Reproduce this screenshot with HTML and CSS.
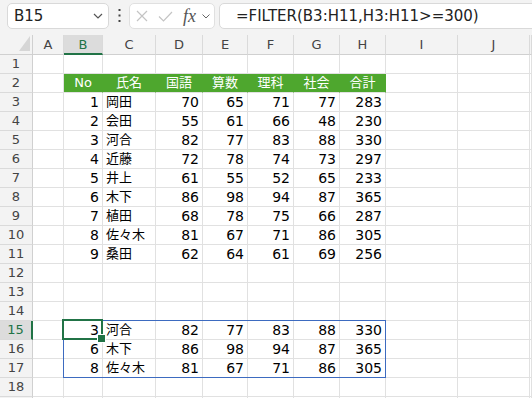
FILE: index.html
```html
<!DOCTYPE html>
<html lang="ja">
  <head>
    <meta charset="UTF-8" />
    <title>FILTER</title>
    <link rel="stylesheet" href="styles.css">
  </head>
  <body>
    <div class="bar">
      <div class="namebox">
        <span>B15</span>
        <svg width="10" height="6" viewBox="0 0 10 6"><path d="M1 1l4 4 4-4" fill="none" stroke="#555" stroke-width="1.2"/></svg>
      </div>
      <div class="dots">
        <svg width="3" height="14" viewBox="0 0 3 14"><rect x="0.5" y="0" width="2" height="2" fill="#444"/><rect x="0.5" y="5.5" width="2" height="2" fill="#444"/><rect x="0.5" y="11" width="2" height="2" fill="#444"/></svg>
      </div>
      <div class="fxbox">
        <svg width="12" height="12" viewBox="0 0 12 12"><path d="M1 1l10 10M11 1L1 11" fill="none" stroke="#c4c4c4" stroke-width="1.2"/></svg>
        <svg width="15" height="11" viewBox="0 0 15 11"><path d="M1 5.5l4.5 4.5L14 1" fill="none" stroke="#c4c4c4" stroke-width="1.2"/></svg>
        <span class="fx">fx</span>
        <svg width="8" height="5" viewBox="0 0 8 5"><path d="M0.5 0.5l3.5 3.5 3.5-3.5" fill="none" stroke="#666" stroke-width="1"/></svg>
      </div>
      <div class="formula">=FILTER(B3:H11,H3:H11&gt;=300)</div>
    </div>

    <div class="sheet">
      <div class="corner"><svg width="11" height="15" viewBox="0 0 11 15"><polygon points="11,0 11,15 0,15" fill="#d6d6d6"/></svg></div>
      <div class="ch">A</div><div class="ch on">B</div><div class="ch">C</div><div class="ch">D</div><div class="ch">E</div><div class="ch">F</div><div class="ch">G</div><div class="ch">H</div><div class="ch">I</div><div class="ch">J</div><div class="ch"></div>

      <div class="rh">1</div><div class="c"></div><div class="c"></div><div class="c"></div><div class="c"></div><div class="c"></div><div class="c"></div><div class="c"></div><div class="c"></div><div class="c"></div><div class="c"></div><div class="c"></div>

      <div class="rh">2</div><div class="c"></div><div class="c hd">No</div><div class="c hd">氏名</div><div class="c hd">国語</div><div class="c hd">算数</div><div class="c hd">理科</div><div class="c hd">社会</div><div class="c hd">合計</div><div class="c"></div><div class="c"></div><div class="c"></div>

      <div class="rh">3</div><div class="c"></div><div class="c n">1</div><div class="c t">岡田</div><div class="c n">70</div><div class="c n">65</div><div class="c n">71</div><div class="c n">77</div><div class="c n">283</div><div class="c"></div><div class="c"></div><div class="c"></div>
      <div class="rh">4</div><div class="c"></div><div class="c n">2</div><div class="c t">会田</div><div class="c n">55</div><div class="c n">61</div><div class="c n">66</div><div class="c n">48</div><div class="c n">230</div><div class="c"></div><div class="c"></div><div class="c"></div>
      <div class="rh">5</div><div class="c"></div><div class="c n">3</div><div class="c t">河合</div><div class="c n">82</div><div class="c n">77</div><div class="c n">83</div><div class="c n">88</div><div class="c n">330</div><div class="c"></div><div class="c"></div><div class="c"></div>
      <div class="rh">6</div><div class="c"></div><div class="c n">4</div><div class="c t">近藤</div><div class="c n">72</div><div class="c n">78</div><div class="c n">74</div><div class="c n">73</div><div class="c n">297</div><div class="c"></div><div class="c"></div><div class="c"></div>
      <div class="rh">7</div><div class="c"></div><div class="c n">5</div><div class="c t">井上</div><div class="c n">61</div><div class="c n">55</div><div class="c n">52</div><div class="c n">65</div><div class="c n">233</div><div class="c"></div><div class="c"></div><div class="c"></div>
      <div class="rh">8</div><div class="c"></div><div class="c n">6</div><div class="c t">木下</div><div class="c n">86</div><div class="c n">98</div><div class="c n">94</div><div class="c n">87</div><div class="c n">365</div><div class="c"></div><div class="c"></div><div class="c"></div>
      <div class="rh">9</div><div class="c"></div><div class="c n">7</div><div class="c t">植田</div><div class="c n">68</div><div class="c n">78</div><div class="c n">75</div><div class="c n">66</div><div class="c n">287</div><div class="c"></div><div class="c"></div><div class="c"></div>
      <div class="rh">10</div><div class="c"></div><div class="c n">8</div><div class="c t">佐々木</div><div class="c n">81</div><div class="c n">67</div><div class="c n">71</div><div class="c n">86</div><div class="c n">305</div><div class="c"></div><div class="c"></div><div class="c"></div>
      <div class="rh">11</div><div class="c"></div><div class="c n">9</div><div class="c t">桑田</div><div class="c n">62</div><div class="c n">64</div><div class="c n">61</div><div class="c n">69</div><div class="c n">256</div><div class="c"></div><div class="c"></div><div class="c"></div>

      <div class="rh">12</div><div class="c"></div><div class="c"></div><div class="c"></div><div class="c"></div><div class="c"></div><div class="c"></div><div class="c"></div><div class="c"></div><div class="c"></div><div class="c"></div><div class="c"></div>
      <div class="rh">13</div><div class="c"></div><div class="c"></div><div class="c"></div><div class="c"></div><div class="c"></div><div class="c"></div><div class="c"></div><div class="c"></div><div class="c"></div><div class="c"></div><div class="c"></div>
      <div class="rh">14</div><div class="c"></div><div class="c"></div><div class="c"></div><div class="c"></div><div class="c"></div><div class="c"></div><div class="c"></div><div class="c"></div><div class="c"></div><div class="c"></div><div class="c"></div>

      <!-- spill result of the FILTER formula in B15 -->
      <div class="rh on">15</div><div class="c"></div><div class="c n sel"><span class="spill"></span><span class="cursor"></span>3</div><div class="c t">河合</div><div class="c n">82</div><div class="c n">77</div><div class="c n">83</div><div class="c n">88</div><div class="c n">330</div><div class="c"></div><div class="c"></div><div class="c"></div>
      <div class="rh">16</div><div class="c"></div><div class="c n">6</div><div class="c t">木下</div><div class="c n">86</div><div class="c n">98</div><div class="c n">94</div><div class="c n">87</div><div class="c n">365</div><div class="c"></div><div class="c"></div><div class="c"></div>
      <div class="rh">17</div><div class="c"></div><div class="c n">8</div><div class="c t">佐々木</div><div class="c n">81</div><div class="c n">67</div><div class="c n">71</div><div class="c n">86</div><div class="c n">305</div><div class="c"></div><div class="c"></div><div class="c"></div>

      <div class="rh">18</div><div class="c"></div><div class="c"></div><div class="c"></div><div class="c"></div><div class="c"></div><div class="c"></div><div class="c"></div><div class="c"></div><div class="c"></div><div class="c"></div><div class="c"></div>
      <div class="rh"></div><div class="c"></div><div class="c"></div><div class="c"></div><div class="c"></div><div class="c"></div><div class="c"></div><div class="c"></div><div class="c"></div><div class="c"></div><div class="c"></div><div class="c"></div>
    </div>
  </body>
</html>
```

FILE: styles.css
```css
* {
  margin: 0;
  padding: 0;
  box-sizing: border-box;
}
body {
  width: 532px;
  height: 398px;
  overflow: hidden;
  background-color: #fff;
  font-family: "DejaVu Sans", "Noto Sans CJK JP", sans-serif;
  color: #000;
}

/* formula bar */
.bar {
  height: 35px;
  background-color: #f3f3f3;
  display: flex;
  align-items: flex-start;
  padding: 3px 0 0 7px;
}
.namebox {
  width: 102px;
  height: 26px;
  background-color: #fff;
  border: 1px solid #d9d9d9;
  border-radius: 5px;
  display: flex;
  align-items: center;
  justify-content: space-between;
  padding: 0 5px 0 6px;
  font-size: 15px;
  color: #222;
}
.dots {
  width: 20px;
  display: flex;
  justify-content: center;
  padding-top: 6px;
}
.fxbox {
  width: 86px;
  height: 26px;
  background-color: #fff;
  border: 1px solid #e0e0e0;
  border-radius: 5px;
  display: flex;
  align-items: center;
  gap: 10px;
  padding-left: 6px;
}
.fx {
  font-family: "Liberation Serif", serif;
  font-style: italic;
  font-size: 18px;
  color: #555;
  margin-right: -4px;
}
.formula {
  flex: 1;
  height: 26px;
  margin: 0 -6px 0 4px;
  background-color: #fff;
  border: 1px solid #d9d9d9;
  border-radius: 5px;
  padding-left: 16px;
  font-size: 15px;
  line-height: 24px;
  color: #222;
}

/* grid */
.sheet {
  display: grid;
  grid-template-columns: 33px 31px 39px 53px 47px 45px 46px 46px 46px 72px 72px 1fr;
  grid-template-rows: 20px;
  grid-auto-rows: 19px;
}
.corner {
  background-color: #f3f3f3;
  border-right: 1px solid #d0d0d0;
  border-bottom: 1px solid #d0d0d0;
  display: flex;
  justify-content: flex-end;
  align-items: flex-end;
  padding: 0 2px 3px 0;
}
.ch {
  background-color: #f3f3f3;
  border-right: 1px solid #dadada;
  border-bottom: 1px solid #d0d0d0;
  text-align: center;
  font-size: 13px;
  line-height: 20px;
  color: #444;
}
.ch.on {
  background-color: #dcdcdc;
  color: #217346;
  border-bottom: 2px solid #217346;
}
.rh {
  background-color: #f3f3f3;
  border-right: 1px solid #d0d0d0;
  border-bottom: 1px solid #dadada;
  text-align: center;
  font-size: 13px;
  line-height: 18px;
  color: #444;
}
.rh.on {
  background-color: #dcdcdc;
  color: #217346;
  border-right: 2px solid #217346;
}
.c {
  border-right: 1px solid #e1e1e1;
  border-bottom: 1px solid #e1e1e1;
  font-size: 14px;
  line-height: 18px;
  white-space: nowrap;
}
.n {
  text-align: right;
  padding-right: 3px;
}
.t {
  padding-left: 3px;
  font-size: 13px;
}
.hd {
  background-color: #4ea72e;
  border-right-color: #4ea72e;
  color: #fff;
  text-align: center;
  font-size: 13px;
}

/* selection + spill range */
.sel {
  position: relative;
}
.spill {
  position: absolute;
  left: -1px;
  top: -1px;
  width: 323px;
  height: 58px;
  border: 1px solid #3d6bc0;
}
.cursor {
  position: absolute;
  left: -2px;
  top: -2px;
  right: -1px;
  bottom: -1px;
  border: 2px solid #217346;
}
.cursor::after {
  content: "";
  position: absolute;
  right: -5px;
  bottom: -5px;
  width: 7px;
  height: 7px;
  background-color: #217346;
  border: 1px solid #fff;
}
```
